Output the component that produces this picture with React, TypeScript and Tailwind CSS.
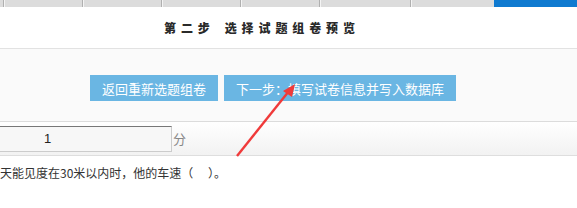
import React from 'react';

const cjk = { fontFamily: '"Noto Sans CJK SC", "Liberation Sans", sans-serif' };

const tabs = [3, 79, 79, 79, 79, 91, 84];

export default function App() {
  return (
    <div className="relative w-[577px] h-[208px] overflow-hidden bg-white" style={cjk}>
      {/* top tab strip */}
      <div className="flex h-[7px]">
        {tabs.map((w, i) => (
          <div
            key={i}
            className={`h-full bg-[#dcdcdc] ${i > 0 ? 'border-l border-[#b0b0b0] shadow-[inset_1px_0_0_#f4f4f4]' : ''}`}
            style={{ width: w }}
          />
        ))}
        <div className="h-full flex-1 bg-[#0f7ad0]" />
      </div>

      {/* step title */}
      <div className="h-[42px] flex items-center pl-[164px] border-b border-[#e2e2e2]">
        <span className="text-[12px] leading-none font-black text-[#2a2a2a] tracking-[4.9px]">
          第二步<span className="ml-[10px]">选择试题组卷预览</span>
        </span>
      </div>

      {/* buttons */}
      <div className="bg-[#fafafa] pt-[26px] pb-[20px] pl-[90px] flex gap-[6px] border-b border-[#dcdcdc]">
        <button className="h-[26px] px-[12px] bg-[#6ab6e3] text-white text-[13px] leading-none">
          返回重新选题组卷
        </button>
        <button className="h-[26px] px-[12px] bg-[#6ab6e3] text-white text-[13px] leading-none">
          下一步：填写试卷信息并写入数据库
        </button>
      </div>

      {/* score row */}
      <div className="h-[34px] flex items-center bg-gradient-to-b from-white to-[#f2f2f2] border-b border-[#dedede]">
        <div className="h-[26px] w-[172px] bg-[#f7f7f7] border border-[#cccccc] border-t-[#777] border-l-0 flex items-center pl-[44px] text-[13px] text-[#222]" style={{ fontFamily: '"Liberation Sans", sans-serif' }}>
          1
        </div>
        <span className="ml-[1px] text-[13px] text-[#888]">分</span>
      </div>

      {/* question text */}
      <div className="pt-[10px] text-[12px] leading-[14px] text-[#333] whitespace-pre">
        天能见度在30米以内时，他的车速（　 ）。
      </div>

      {/* annotation arrow */}
      <svg className="absolute left-0 top-0 pointer-events-none" width="577" height="208" viewBox="0 0 577 208">
        <line x1="237" y1="156" x2="289" y2="91" stroke="#f03a3a" strokeWidth="2.4" />
        <polygon points="295,84 283,91 292,97" fill="#f03a3a" />
      </svg>
    </div>
  );
}
